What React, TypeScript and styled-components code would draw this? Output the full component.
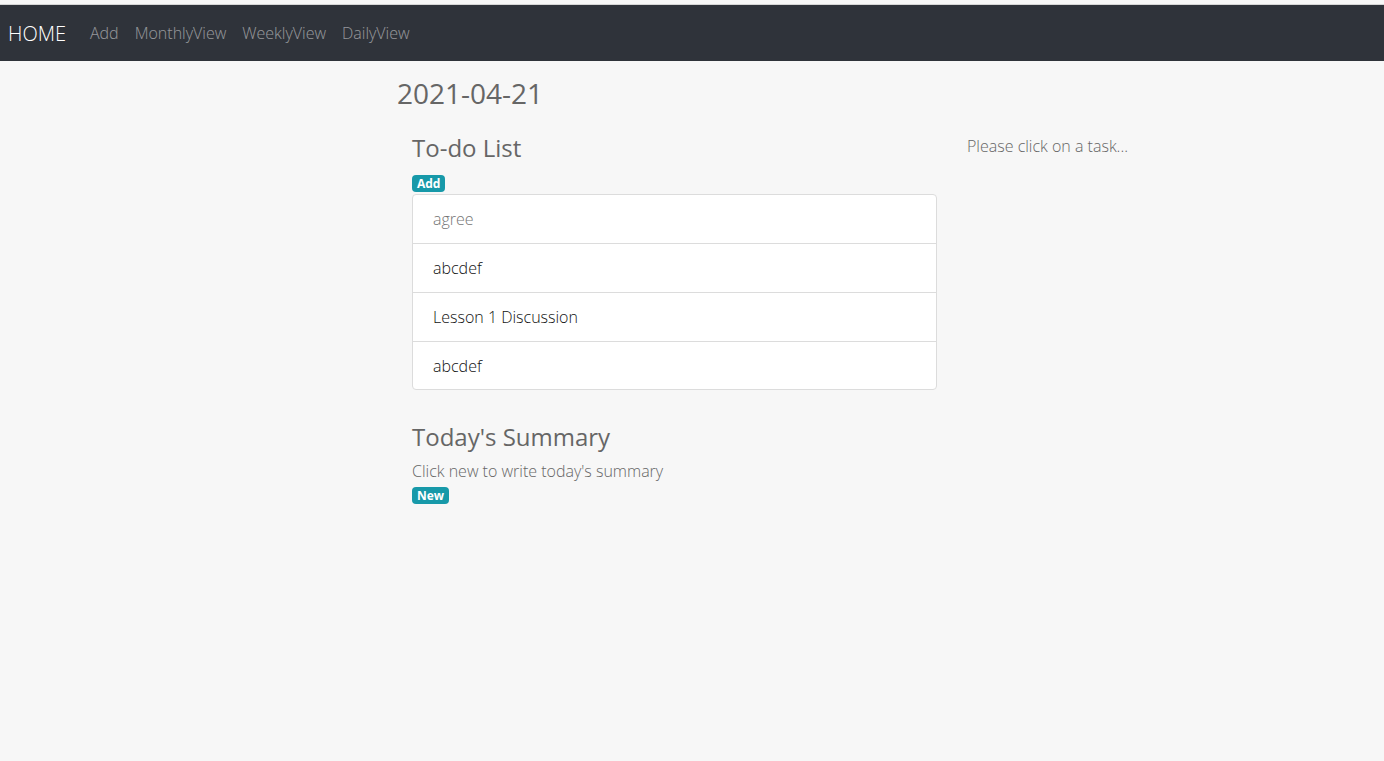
import React from "react";
import styled, { createGlobalStyle } from "styled-components";

const Global = createGlobalStyle`
  html, body { margin: 0; padding: 0; background: #f7f7f7; }
  body { font-family: "Open Sans", "Liberation Sans", sans-serif; font-weight: 300; color: #666; }
  * { box-sizing: border-box; }
`;

const TopStrip = styled.div`
  height: 5px;
  background: #f7f7f7;
  border-bottom: 1px solid #d6d6d6;
`;

const Navbar = styled.nav`
  height: 56px;
  background: #2f333a;
  display: flex;
  align-items: center;
  padding: 0 8px;
`;

const Brand = styled.a`
  font-size: 20px;
  color: #fff;
  font-weight: 300;
  margin-right: 16px;
  text-decoration: none;
`;

const NavLink = styled.a`
  font-size: 16px;
  color: rgba(255, 255, 255, 0.5);
  padding: 0 8px;
  text-decoration: none;
`;

const Main = styled.main`
  padding-left: 397px;
  padding-top: 16px;
`;

const DateTitle = styled.h2`
  margin: 0;
  font-size: 28px;
  font-weight: 400;
  color: #666;
  line-height: 1.2;
`;

const Row = styled.div`
  display: flex;
  padding-left: 15px;
  margin-top: 23px;
`;

const LeftCol = styled.section`
  width: 525px;
`;

const RightCol = styled.section`
  margin-left: 30px;
  padding-top: 1px;
  font-size: 16px;
`;

const SectionTitle = styled.h4`
  margin: 0;
  font-size: 24px;
  font-weight: 400;
  color: #666;
  line-height: 1.2;
`;

const Badge = styled.span`
  display: inline-block;
  background: #1799a9;
  color: #fff;
  font-weight: 700;
  font-size: 12px;
  line-height: 11px;
  height: 17px;
  padding: 3px 5px;
  border-radius: 4px;
`;

const BadgeWrap = styled.div<{ $top: number }>`
  margin-top: ${(p) => p.$top}px;
  height: 17px;
  display: flex;
`;

const List = styled.ul`
  list-style: none;
  margin: 2px 0 0;
  padding: 0;
  background: #fff;
  border: 1px solid #dcdcdc;
  border-radius: 4px;
`;

const Item = styled.li<{ $muted?: boolean }>`
  height: 49px;
  display: flex;
  align-items: center;
  padding: 0 20px;
  font-size: 16px;
  color: ${(p) => (p.$muted ? "#757575" : "#111")};
  & + & { border-top: 1px solid #dcdcdc; }
  &:first-child { height: 48px; }
  &:last-child { height: 48px; }
`;

const Summary = styled.div`
  margin-top: 33px;
`;

const SummaryText = styled.p`
  margin: 8px 0 0;
  font-size: 16px;
  color: #666;
`;

export default function App() {
  const items = ["agree", "abcdef", "Lesson 1 Discussion", "abcdef"];
  return (
    <>
      <Global />
      <TopStrip />
      <Navbar>
        <Brand>HOME</Brand>
        <NavLink>Add</NavLink>
        <NavLink>MonthlyView</NavLink>
        <NavLink>WeeklyView</NavLink>
        <NavLink>DailyView</NavLink>
      </Navbar>
      <Main>
        <DateTitle>2021-04-21</DateTitle>
        <Row>
          <LeftCol>
            <SectionTitle>To-do List</SectionTitle>
            <BadgeWrap $top={13}>
              <Badge>Add</Badge>
            </BadgeWrap>
            <List>
              {items.map((t, i) => (
                <Item key={i} $muted={i === 0}>
                  {t}
                </Item>
              ))}
            </List>
            <Summary>
              <SectionTitle>Today's Summary</SectionTitle>
              <SummaryText>Click new to write today's summary</SummaryText>
              <BadgeWrap $top={5}>
                <Badge>New</Badge>
              </BadgeWrap>
            </Summary>
          </LeftCol>
          <RightCol>Please click on a task...</RightCol>
        </Row>
      </Main>
    </>
  );
}
